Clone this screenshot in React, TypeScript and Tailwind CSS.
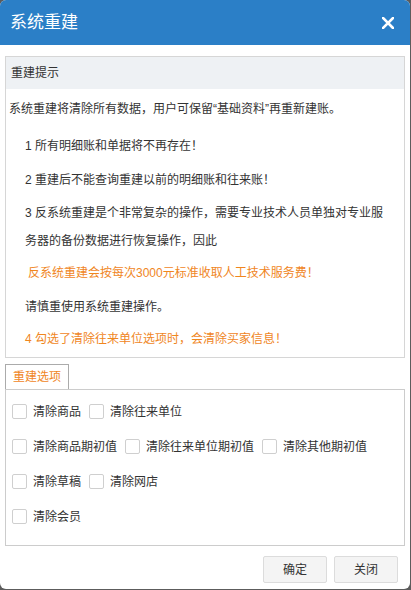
import React from "react";

const font = { fontFamily: '"Liberation Sans", "Noto Sans CJK SC", sans-serif' };

function Check({ label }: { label: string }) {
  return (
    <label className="flex items-center mr-[8px]">
      <span className="w-[15px] h-[15px] border border-[#cfcfcf] rounded-[2px] bg-white" />
      <span className="ml-[6px] text-[12px] text-[#333]">{label}</span>
    </label>
  );
}

export default function App() {
  return (
    <div className="w-[411px] h-[590px] bg-[#5c5c5c]" style={font}>
      <div className="w-[410px] h-[589px] bg-white rounded-[6px] overflow-hidden flex flex-col">
        <div className="h-[45px] bg-[#2b7fc7] flex items-center justify-between pl-[10px] pr-[16px] shrink-0">
          <span className="text-white text-[17px]">系统重建</span>
          <svg width="12" height="12" viewBox="0 0 12 12">
            <path d="M1 1 L11 11 M11 1 L1 11" stroke="white" strokeWidth="2.6" strokeLinecap="square" />
          </svg>
        </div>
        <div className="px-[5px] pt-[11px] flex flex-col">
          <div className="border border-[#d6d6d6]">
            <div className="h-[32px] bg-[#eef1f4] flex items-center pl-[5px] text-[12px] text-[#333]">重建提示</div>
            <div className="pl-[3px] pt-[6px] pb-[4px] text-[12px] text-[#333]">
              <p className="leading-[28px]">系统重建将清除所有数据，用户可保留“基础资料”再重新建账。</p>
              <div className="pl-[16px]">
                <p className="leading-[28px] mt-[9px]">1 所有明细账和单据将不再存在！</p>
                <p className="leading-[28px] mt-[6px]">2 重建后不能查询重建以前的明细账和往来账！</p>
                <p className="leading-[28px] mt-[5px]">
                  3 反系统重建是个非常复杂的操作，需要专业技术人员单独对专业服
                  <br />
                  务器的备份数据进行恢复操作，因此
                </p>
                <p className="leading-[28px] mt-[4px] text-[#f0861e] pl-[3px]">反系统重建会按每次3000元标准收取人工技术服务费！</p>
                <p className="leading-[28px] mt-[6px]">请慎重使用系统重建操作。</p>
                <p className="leading-[28px] mt-[4px] text-[#f0861e]">4 勾选了清除往来单位选项时，会清除买家信息！</p>
              </div>
            </div>
          </div>
          <div className="mt-[6px] flex">
            <div className="w-[64px] h-[25px] border border-b-0 border-[#ababab] pl-[7px] flex items-center text-[12px] text-[#f0861e]">重建选项</div>
          </div>
          <div className="border border-[#cccccc] h-[157px] pl-[6px] pt-[4px]">
            <div className="h-[35px] flex items-center">
              <Check label="清除商品" />
              <Check label="清除往来单位" />
            </div>
            <div className="h-[35px] flex items-center">
              <Check label="清除商品期初值" />
              <Check label="清除往来单位期初值" />
              <Check label="清除其他期初值" />
            </div>
            <div className="h-[35px] flex items-center">
              <Check label="清除草稿" />
              <Check label="清除网店" />
            </div>
            <div className="h-[35px] flex items-center">
              <Check label="清除会员" />
            </div>
          </div>
          <div className="flex justify-end gap-[7px] mt-[10px] pr-[7px]">
            <button className="w-[64px] h-[27px] bg-[#f4f4f4] border border-[#dcdcdc] rounded-[2px] text-[12px] text-[#333]">确定</button>
            <button className="w-[64px] h-[27px] bg-[#f4f4f4] border border-[#dcdcdc] rounded-[2px] text-[12px] text-[#333]">关闭</button>
          </div>
        </div>
      </div>
    </div>
  );
}
